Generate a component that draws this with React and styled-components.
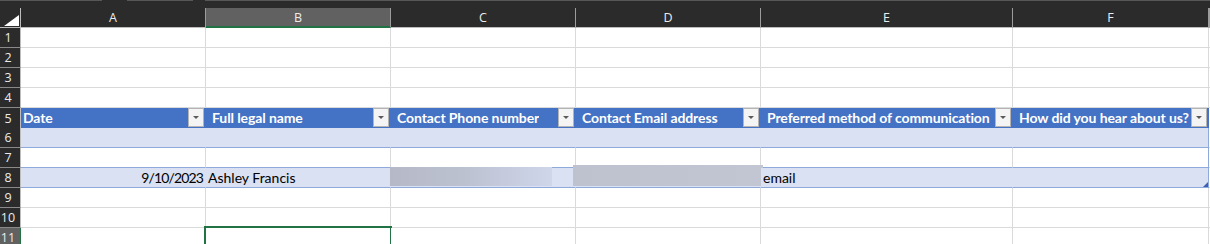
import React from 'react';
import styled, { createGlobalStyle, css } from 'styled-components';

const GlobalStyle = createGlobalStyle`
  body {
    margin: 0;
    background: #ffffff;
    overflow: hidden;
  }
`;

const COLUMNS = `21px 185px 185px 185px 185px 252px 196px 1fr`;
const GREEN = '#217346';
const DARK = '#2b2b2b';
const cellFont = `"Lato", "Open Sans", sans-serif`;
const chromeFont = `"Open Sans", "Noto Sans", sans-serif`;

const Sheet = styled.div`
  width: 1210px;
  height: 244px;
  overflow: hidden;
  background: #fff;
`;

const TopStrip = styled.div`
  height: 8px;
  background: ${DARK};
  display: flex;
  align-items: flex-start;
`;

const StripTab = styled.div`
  height: 1px;
  width: ${p => p.$w};
  margin-right: ${p => p.$gap || '0px'};
  background: #575757;
  flex: ${p => (p.$grow ? 1 : 'none')};
`;

const Row = styled.div`
  display: grid;
  grid-template-columns: ${COLUMNS};
  height: 20px;
`;

const Corner = styled.div`
  background: ${DARK};
  border-right: 1px solid #bdbdbd;
  border-bottom: 1px solid #bdbdbd;
  display: flex;
  align-items: flex-end;
  justify-content: flex-end;
  padding: 0 1px 1px 0;
`;

const ColHead = styled.div`
  background: ${p => (p.$active ? '#616161' : DARK)};
  color: #ececec;
  font-family: ${chromeFont};
  font-size: 12.5px;
  border-right: 1px solid #9c9c9c;
  border-bottom: 1px solid ${p => (p.$active ? GREEN : '#bdbdbd')};
  box-shadow: ${p => (p.$active ? `inset 0 -1px 0 ${GREEN}` : 'none')};
  display: flex;
  align-items: center;
  justify-content: center;
`;

const RowHead = styled.div`
  background: ${p => (p.$active ? '#616161' : DARK)};
  color: #ececec;
  font-family: ${chromeFont};
  font-size: 12.5px;
  border-right: 1px solid ${p => (p.$active ? GREEN : '#bdbdbd')};
  border-bottom: 1px solid #8a8a8a;
  display: flex;
  align-items: center;
  justify-content: center;
  padding-right: 4px;
`;

const tones = {
  plain: css`
    background: #fff;
    border-right: 1px solid #dadada;
    border-bottom: 1px solid #dadada;
  `,
  head: css`
    background: #4472c4;
    color: #fff;
    font-weight: 700;
    letter-spacing: -0.1px;
    border-right: 1px solid #4472c4;
    border-bottom: 1px solid #4472c4;
    align-items: center;
    padding-right: 1px;
  `,
  band: css`
    background: #d9e1f2;
    border-right: 1px solid ${p => (p.$edge ? '#8ea9db' : '#d9e1f2')};
    border-bottom: 1px solid #8ea9db;
  `,
  body: css`
    background: #fff;
    border-right: 1px solid ${p => (p.$edge ? '#8ea9db' : '#dadada')};
    border-bottom: 1px solid #8ea9db;
  `,
};

const Cell = styled.div`
  position: relative;
  display: flex;
  align-items: flex-end;
  justify-content: ${p => (p.$right ? 'flex-end' : 'flex-start')};
  padding: 0 2px 1px ${p => p.$indent || 2}px;
  font-family: ${cellFont};
  font-size: 14px;
  line-height: 17px;
  color: #000;
  white-space: nowrap;
  min-width: 0;
  ${p => tones[p.$tone || 'plain']}
`;

const Label = styled.span`
  overflow: hidden;
`;

const DateValue = styled.span`
  letter-spacing: -0.85px;
`;

const FilterButton = styled.span`
  flex: none;
  margin-left: auto;
  width: 16px;
  height: 19px;
  box-sizing: border-box;
  background: #f4f4f4;
  border: 1px solid #b4b4b4;
  display: flex;
  align-items: center;
  justify-content: center;

  &::after {
    content: '';
    border-left: 3px solid transparent;
    border-right: 3px solid transparent;
    border-top: 3px solid #5a5a5a;
  }
`;

const Redaction = styled.div`
  position: absolute;
  left: ${p => p.$left}px;
  top: ${p => p.$top}px;
  width: ${p => p.$w}px;
  height: ${p => p.$h}px;
  background: ${p => p.$fill};
`;

const Selection = styled.div`
  position: absolute;
  left: -2px;
  top: -2px;
  right: -2px;
  bottom: -2px;
  border: 2px solid ${GREEN};
  pointer-events: none;
`;

const ResizeGrip = styled.svg`
  position: absolute;
  right: 0;
  bottom: 0;
`;

const letters = ['A', 'B', 'C', 'D', 'E', 'F'];
const headers = [
  'Date',
  'Full legal name',
  'Contact Phone number',
  'Contact Email address',
  'Preferred method of communication',
  'How did you hear about us?',
];

function EmptyRow({ n, active }) {
  return (
    <Row>
      <RowHead $active={active}>{n}</RowHead>
      {letters.map(l => (
        <Cell key={l}>{active && l === 'B' && <Selection />}</Cell>
      ))}
      <Cell />
    </Row>
  );
}

export default function App() {
  return (
    <Sheet>
      <GlobalStyle />
      <TopStrip>
        <StripTab $w="102px" $gap="25px" />
        <StripTab $w="66px" $gap="12px" />
        <StripTab $grow />
      </TopStrip>

      <Row>
        <Corner>
          <svg width="15" height="11" viewBox="0 0 15 11">
            <polygon points="15,0 15,11 0,11" fill="#ffffff" />
          </svg>
        </Corner>
        {letters.map(l => (
          <ColHead key={l} $active={l === 'B'}>{l}</ColHead>
        ))}
        <ColHead />
      </Row>

      {[1, 2, 3, 4].map(n => (
        <EmptyRow key={n} n={n} />
      ))}

      <Row>
        <RowHead>5</RowHead>
        {headers.map((h, i) => (
          <Cell key={h} $tone="head" $indent={i === 0 ? 2 : 6}>
            <Label>{h}</Label>
            <FilterButton />
          </Cell>
        ))}
        <Cell />
      </Row>

      <Row>
        <RowHead>6</RowHead>
        {letters.map((l, i) => (
          <Cell key={l} $tone="band" $edge={i === 5} />
        ))}
        <Cell />
      </Row>

      <Row>
        <RowHead>7</RowHead>
        {letters.map((l, i) => (
          <Cell key={l} $tone="body" $edge={i === 5} />
        ))}
        <Cell />
      </Row>

      <Row>
        <RowHead>8</RowHead>
        <Cell $tone="band" $right>
          <DateValue>9/10/2023</DateValue>
        </Cell>
        <Cell $tone="band">Ashley Francis</Cell>
        <Cell $tone="band">
          <Redaction
            $left={-1}
            $top={-1}
            $w={162}
            $h={19}
            $fill="linear-gradient(90deg, #b5b9c7 0%, #bcc1d0 45%, #cfd6ea 100%)"
          />
        </Cell>
        <Cell $tone="band">
          <Redaction
            $left={-3}
            $top={-3}
            $w={190}
            $h={21}
            $fill="linear-gradient(90deg, #bec2cf 0%, #c2c6d3 100%)"
          />
        </Cell>
        <Cell $tone="band">email</Cell>
        <Cell $tone="band" $edge>
          <ResizeGrip width="5" height="5" viewBox="0 0 5 5">
            <polygon points="5,0 5,5 0,5" fill="#3d5fb0" />
          </ResizeGrip>
        </Cell>
        <Cell />
      </Row>

      {[9, 10, 11].map(n => (
        <EmptyRow key={n} n={n} active={n === 11} />
      ))}
    </Sheet>
  );
}
